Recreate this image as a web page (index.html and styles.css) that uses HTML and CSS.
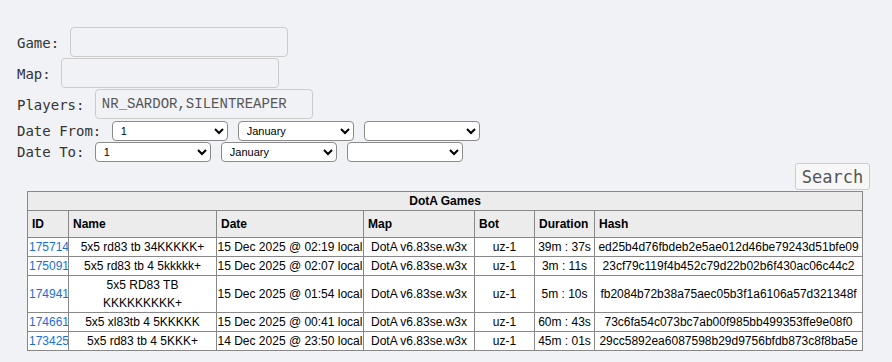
FILE: index.html
```html
<!DOCTYPE html>
<html lang="en">
<head>
    <meta charset="UTF-8">
    <title>DotA Games</title>

    <link rel="stylesheet" href="styles.css">

</head>
<body>

    <form id="search-box">
        <div class="field"><label>Game: </label><input type="text" name="game"></div>
        <div class="field"><label>Map: </label><input type="text" name="map"></div>
        <div class="field"><label>Players: </label><input type="text" name="players" value="NR_SARDOR,SILENTREAPER"></div>
        <div class="field date-row">
            <label>Date From: </label>
            <select><option>1</option></select>
            <select><option>January</option></select>
            <select><option></option></select>
        </div>
        <div class="field date-row">
            <label>Date To: </label>
            <select><option>1</option></select>
            <select><option>January</option></select>
            <select><option></option></select>
        </div>
        <div class="btn-row">
            <button type="button" class="search-btn">Search</button>
        </div>

        <table class="games">
            <colgroup>
                <col style="width: 41px">
                <col style="width: 148px">
                <col style="width: 147px">
                <col style="width: 111px">
                <col style="width: 60px">
                <col style="width: 60px">
                <col style="width: 268px">
            </colgroup>
            <thead>
                <tr><th colspan="7" class="caption">DotA Games</th></tr>
                <tr>
                    <th>ID</th>
                    <th>Name</th>
                    <th>Date</th>
                    <th>Map</th>
                    <th>Bot</th>
                    <th>Duration</th>
                    <th>Hash</th>
                </tr>
            </thead>
            <tbody>
                <tr>
                    <td class="id"><a href="#">175714</a></td>
                    <td>5x5 rd83 tb 34KKKKK+</td>
                    <td class="nw">15 Dec 2025 @ 02:19 local</td>
                    <td class="nw">DotA v6.83se.w3x</td>
                    <td>uz-1</td>
                    <td class="nw">39m : 37s</td>
                    <td class="nw">ed25b4d76fbdeb2e5ae012d46be79243d51bfe09</td>
                </tr>
                <tr>
                    <td class="id"><a href="#">175091</a></td>
                    <td>5x5 rd83 tb 4 5kkkkk+</td>
                    <td class="nw">15 Dec 2025 @ 02:07 local</td>
                    <td class="nw">DotA v6.83se.w3x</td>
                    <td>uz-1</td>
                    <td class="nw">3m : 11s</td>
                    <td class="nw">23cf79c119f4b452c79d22b02b6f430ac06c44c2</td>
                </tr>
                <tr>
                    <td class="id"><a href="#">174941</a></td>
                    <td>5x5 RD83 TB KKKKKKKKK+</td>
                    <td class="nw">15 Dec 2025 @ 01:54 local</td>
                    <td class="nw">DotA v6.83se.w3x</td>
                    <td>uz-1</td>
                    <td class="nw">5m : 10s</td>
                    <td class="nw">fb2084b72b38a75aec05b3f1a6106a57d321348f</td>
                </tr>
                <tr>
                    <td class="id"><a href="#">174661</a></td>
                    <td>5x5 xl83tb 4 5KKKKK</td>
                    <td class="nw">15 Dec 2025 @ 00:41 local</td>
                    <td class="nw">DotA v6.83se.w3x</td>
                    <td>uz-1</td>
                    <td class="nw">60m : 43s</td>
                    <td class="nw">73c6fa54c073bc7ab00f985bb499353ffe9e08f0</td>
                </tr>
                <tr>
                    <td class="id"><a href="#">173425</a></td>
                    <td>5x5 rd83 tb 4 5KKK+</td>
                    <td class="nw">14 Dec 2025 @ 23:50 local</td>
                    <td class="nw">DotA v6.83se.w3x</td>
                    <td>uz-1</td>
                    <td class="nw">45m : 01s</td>
                    <td class="nw">29cc5892ea6087598b29d9756bfdb873c8f8ba5e</td>
                </tr>
            </tbody>
        </table>
    </form>

</body>
</html>
```

FILE: styles.css
```css
body {
    margin: 0;
    background-color: #f1f2f6;
    color: #222;
    font-family: 'DejaVu Sans Mono', monospace;
    font-size: 14px;
}
#search-box {
    width: 853px;
    padding: 27px 0 0 17px;
}
.field {
    display: flex;
    align-items: center;
    height: 31px;
}
.field>label {
    white-space: pre;
    color: #333;
}
.field>input {
    box-sizing: border-box;
    width: 218px;
    height: 30px;
    margin: 0 0 1px 2px;
    padding: 0 6px;
    background-color: #f1f2f6;
    border: 1px solid #ccc;
    border-radius: 4px;
    font-family: 'Liberation Mono', monospace;
    font-size: 14px;
    color: #555;
    outline: none;
}
.date-row {
    height: 21px;
}
.date-row>select {
    box-sizing: border-box;
    width: 116px;
    height: 20px;
    margin-left: 2px;
    margin-right: 8px;
    padding: 0 4px;
    background-color: white;
    border: 1px solid #8a8a8a;
    border-radius: 4px;
    font-family: 'Liberation Sans', sans-serif;
    font-size: 11px;
    color: black;
}
.btn-row {
    display: flex;
    justify-content: flex-end;
    margin-top: 1px;
}
.search-btn {
    width: 75px;
    height: 27px;
    padding: 0;
    background-color: #f7f7f8;
    border: 1px solid #ccc;
    border-radius: 3px;
    font-family: 'DejaVu Sans Mono', monospace;
    font-size: 17px;
    color: #555;
}
.games {
    width: 835px;
    margin: 1px 0 0 10px;
    table-layout: fixed;
    border-collapse: collapse;
    border: 1px solid #888;
    background-color: white;
    font-family: 'Liberation Sans', Arial, sans-serif;
    font-size: 12px;
    color: black;
}
.games th {
    background-color: #ececec;
    border: 1px solid #888;
    text-align: left;
    padding: 4px 4px;
    line-height: 18px;
}
.games th.caption {
    text-align: center;
    padding: 0;
}
.games td {
    border: 1px solid #888;
    text-align: center;
    padding: 0 1px;
    line-height: 18px;
    overflow: hidden;
}
.games td.nw {
    white-space: nowrap;
    padding: 0;
}
.games td.id {
    text-align: left;
}
.games a {
    color: #1a6fd6;
    text-decoration: none;
}
```
